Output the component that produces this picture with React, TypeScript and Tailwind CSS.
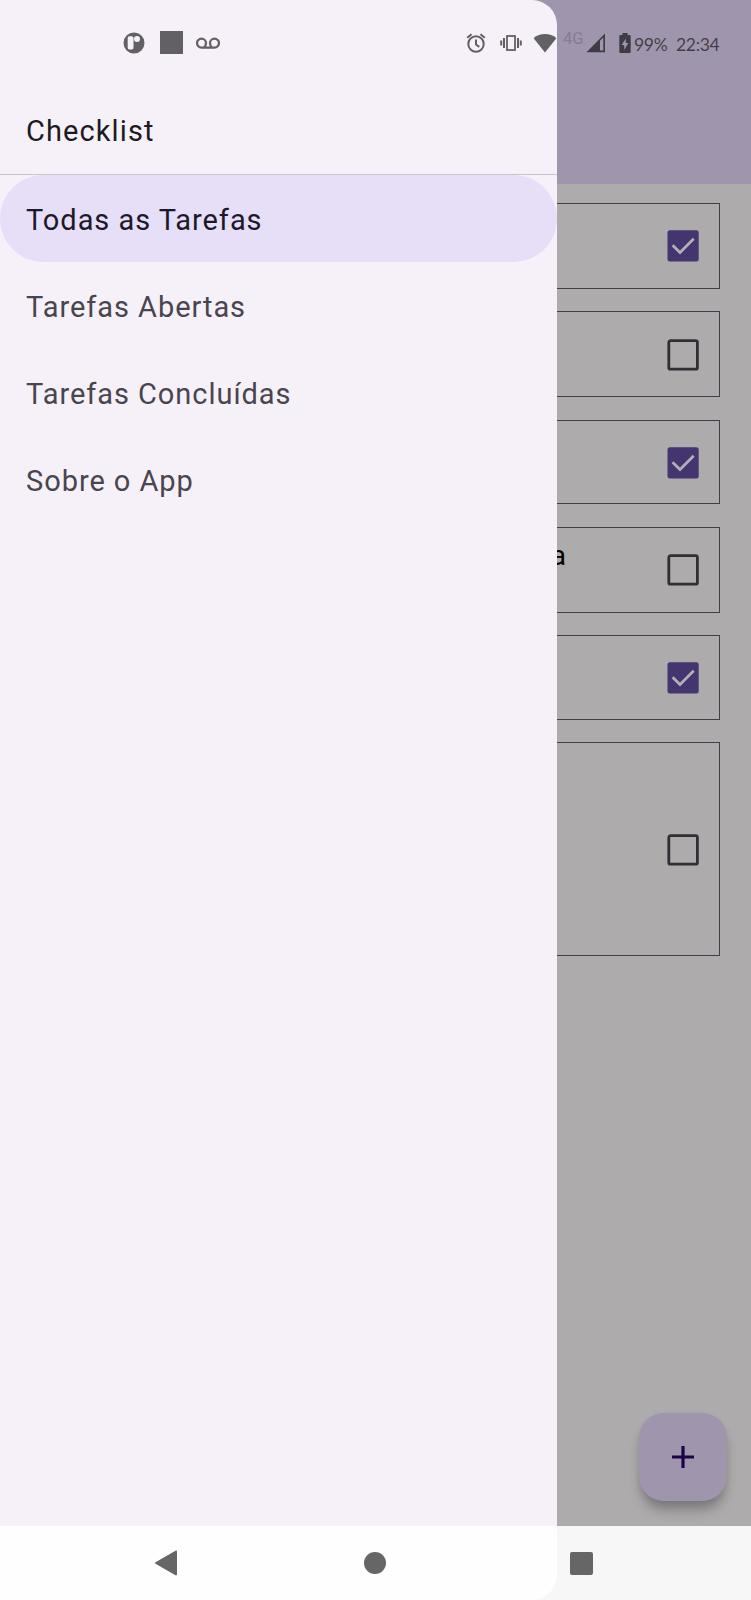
type Task = { id: number; label: string; done: boolean; box: string };

const tasks: Task[] = [
  { id: 1, label: "", done: true, box: "h-[86px] mb-[22px]" },
  { id: 2, label: "", done: false, box: "h-[86px] mb-[23px] pt-px" },
  { id: 3, label: "", done: true, box: "h-[84px] mb-[23px] pt-px" },
  { id: 4, label: "a", done: false, box: "h-[86px] mb-[22px]" },
  { id: 5, label: "", done: true, box: "h-[85px] mb-[22px]" },
  { id: 6, label: "", done: false, box: "h-[214px] pt-px" },
];

const items = ["Todas as Tarefas", "Tarefas Abertas", "Tarefas Concluídas", "Sobre o App"];

function Checkbox({ done }: { done: boolean }) {
  return (
    <svg viewBox="0 0 32 32" className="h-8 w-8 shrink-0" fill="none">
      {done ? (
        <>
          <rect x="0.5" y="0.3" width="31.2" height="31.2" rx="2.5" fill="#45356f" />
          <path d="M5.600 15.200l7.400 7.300L26.700 8.800" stroke="#b3afb9" strokeWidth="2.7" />
        </>
      ) : (
        <rect x="1.8" y="1.6" width="28.6" height="28.6" rx="1.8" stroke="#312f35" strokeWidth="2.8" />
      )}
    </svg>
  );
}

function TaskCard({ task }: { task: Task }) {
  return (
    <div className={`flex items-center justify-between border border-[#403e4a] pr-[20px] ${task.box}`}>
      <span className="w-[535px] self-start pt-[11px] text-right text-[28px] leading-[34px] text-black">
        {task.label}
      </span>
      <Checkbox done={task.done} />
    </div>
  );
}

function StatusBar() {
  return (
    <div className="absolute inset-x-0 top-0 flex h-[85px] items-center text-black/60">
      <svg viewBox="0 0 22 22" className="ml-[123px] h-[22px] w-[22px] shrink-0" fill="currentColor">
        <path
          fillRule="evenodd"
          d="M11 .5a10.500 10.500 0 1 0 0 21a10.500 10.500 0 1 0 0-21zM6.500 4.200h2.200q1.800 0 1.800 1.800v9.800q0 1.800-1.800 1.800H6.500q-1.800 0-1.800-1.800V6q0-1.800 1.800-1.800zM14 4a3 3 0 1 0 0 6a3 3 0 1 0 0-6z"
        />
      </svg>
      <span className="ml-[15px] h-[23px] w-[23px] shrink-0 bg-current" />
      <svg viewBox="0 0 24 12" className="ml-[13px] h-3 w-6 shrink-0" fill="none" stroke="currentColor" strokeWidth="2.2">
        <path d="M5.500 10.600a4.500 4.500 0 1 1 4.500-4.500c0 2-.9 3.500-2 4.500M5.500 10.600h13a4.500 4.500 0 1 0-4.500-4.500c0 2 .9 3.500 2 4.500" />
      </svg>
      <svg viewBox="0 0 20 20" className="ml-[246px] h-5 w-5 shrink-0" fill="none" stroke="currentColor" strokeWidth="2">
        <circle cx="10" cy="11" r="7.700" />
        <path d="M10 6.500v5l3.300 2.400M1.200 4.700l4.400-3.500M18.800 4.700l-4.400-3.500" />
      </svg>
      <svg viewBox="0 0 22 18" className="ml-[14px] h-[18px] w-[22px] shrink-0" fill="none" stroke="currentColor" strokeWidth="2">
        <rect x="7" y="2" width="8" height="14" strokeWidth="1.800" />
        <path d="M1.200 6.500v5M4 4v10M18 4v10M20.800 6.500v5" />
      </svg>
      <svg viewBox="0 0 24 20" className="ml-[11px] h-5 w-6 shrink-0" fill="currentColor">
        <path d="M12 19.500L.6 5.200Q5.500 1 12 1T23.400 5.200z" />
      </svg>
      <span className="ml-[6px] w-[23px] shrink-0 pb-[6px] text-[16.500px] leading-none text-[#867c91]">4G</span>
      <svg viewBox="0 0 20 20" className="h-5 w-5 shrink-0">
        <path fill="currentColor" fillRule="evenodd" d="M.5 19.200L19 .5v18.700zM14 7.800v9.600h3.300V4.500z" />
      </svg>
      <svg viewBox="0 0 12 20" className="ml-[13px] h-5 w-3 shrink-0">
        <path
          fill="currentColor"
          fillRule="evenodd"
          d="M3.500 0h5v2h2q1.200 0 1.200 1.200v15.600q0 1.200-1.200 1.200h-9Q.3 20 .3 18.800V3.200Q.3 2 1.500 2h2zM6.800 5.500L2.600 12h2.600v4.800L9.400 10H6.800z"
        />
      </svg>
      <div className="ml-[3px] flex gap-[9px] whitespace-nowrap pt-[5px] font-['Lato',sans-serif] text-[17.500px] leading-none tracking-[-0.3px]">
        <span className="w-[33px]">99%</span>
        <span>22:34</span>
      </div>
    </div>
  );
}

function NavigationBar() {
  return (
    <div className="absolute inset-x-0 bottom-0 h-[74px] bg-white/90">
      <div className="flex h-[74px] items-center text-[#666666]">
        <svg viewBox="0 0 24 26" className="ml-[154px] h-[26px] w-6" fill="currentColor">
          <path d="M1.500 12.200L21.500.7q1.500-.6 1.500 1v22.600q0 1.600-1.500 1L1.500 13.800q-1.200-.8 0-1.600z" />
        </svg>
        <span className="ml-[186px] h-[22px] w-[22px] rounded-full bg-current" />
        <span className="ml-[184px] h-[23px] w-[23px] rounded-[2px] bg-current" />
      </div>
    </div>
  );
}

export default function App() {
  return (
    <div className="relative h-[1600px] w-[751px] overflow-hidden bg-[#adabab] font-['Roboto',sans-serif]">
      <header className="h-[184px] bg-[#9f95ac]" />
      <main className="flex flex-col pl-[30px] pr-[31px] pt-[19px]">
        {tasks.map((task) => (
          <TaskCard key={task.id} task={task} />
        ))}
      </main>
      <button
        aria-label="+"
        className="absolute right-[24px] bottom-[99px] flex h-[88px] w-[88px] items-center justify-center rounded-[25px] bg-[#9f95ac] shadow-[0_11px_12px_-2px_rgba(0,0,0,0.26),0_2px_6px_rgba(0,0,0,0.06)]"
      >
        <svg viewBox="0 0 22 22" className="-ml-px h-[22px] w-[22px]" stroke="#1b0546" strokeWidth="3.2">
          <path d="M11 0v22M0 11h22" />
        </svg>
      </button>

      <aside className="absolute inset-y-0 left-0 w-[557px] overflow-hidden rounded-r-[25px] bg-[#f6f1f9]">
        <h1 className="h-[175px] border-b border-[#c9c3cc] pt-[112px] pl-[26px] text-[29px] leading-[38px] font-normal tracking-[1.1px] text-[#1d1b20]">
          Checklist
        </h1>
        <nav className="flex flex-col">
          {items.map((label, i) => (
            <a
              key={label}
              className={`flex h-[87px] items-center rounded-full pt-[3px] pl-[26px] text-[29px] leading-[38px] tracking-[0.95px] ${
                i === 0 ? "bg-[#e7def7] text-[#1d192b]" : "text-[#49454f]"
              }`}
            >
              {label}
            </a>
          ))}
        </nav>
      </aside>

      <StatusBar />
      <NavigationBar />
    </div>
  );
}
